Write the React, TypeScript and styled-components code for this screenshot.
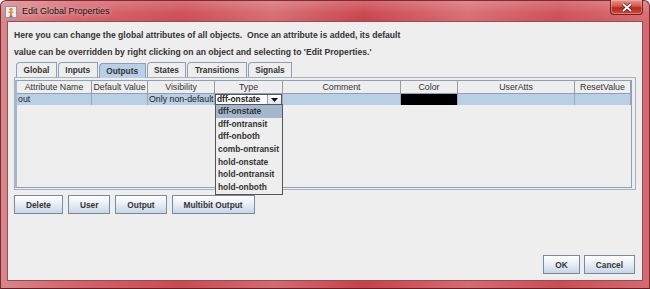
import styled, { createGlobalStyle } from "styled-components";

const GlobalStyle = createGlobalStyle`
  html, body {
    margin: 0;
    padding: 0;
  }
  body {
    width: 650px;
    height: 289px;
    overflow: hidden;
    font-family: "Liberation Sans", Arial, sans-serif;
  }
`;

const columns = [
  { label: "Attribute Name", width: 75 },
  { label: "Default Value", width: 56 },
  { label: "Visibility", width: 67 },
  { label: "Type", width: 68 },
  { label: "Comment", width: 118 },
  { label: "Color", width: 57 },
  { label: "UserAtts", width: 117 },
  { label: "ResetValue", width: 56 },
];

const gridCols = columns.map((c) => `${c.width}px`).join(" ");

const tabs = ["Global", "Inputs", "Outputs", "States", "Transitions", "Signals"];

const typeOptions = [
  "dff-onstate",
  "dff-ontransit",
  "dff-onboth",
  "comb-ontransit",
  "hold-onstate",
  "hold-ontransit",
  "hold-onboth",
];

const App = () => {
  return (
    <>
      <GlobalStyle />
      <Frame>
        <TitleBar>
          <AppIcon />
          <Title>Edit Global Properties</Title>
          <CloseButton>
            <svg width="12" height="9" viewBox="0 0 12 9">
              <path d="M2 1 L10 8 M10 1 L2 8" stroke="#5a1b1b" strokeWidth="3.4" />
              <path d="M2 1 L10 8 M10 1 L2 8" stroke="#ffffff" strokeWidth="1.8" />
            </svg>
          </CloseButton>
        </TitleBar>
        <Body>
          <Content>
            <Description>
              Here you can change the global attributes of all objects.&nbsp; Once an attribute is
              added, its default
              <br />
              value can be overridden by right clicking on an object and selecting to 'Edit
              Properties.'
            </Description>
            <TabRow>
              {tabs.map((t) => (
                <Tab key={t} $active={t === "Outputs"}>
                  {t}
                </Tab>
              ))}
            </TabRow>
            <TabPanel>
              <ScrollPane>
                <HeaderRow>
                  {columns.map((c) => (
                    <HeaderCell key={c.label}>{c.label}</HeaderCell>
                  ))}
                </HeaderRow>
                <DataRow>
                  <Cell>out</Cell>
                  <Cell />
                  <Cell>Only non-default</Cell>
                  <TypeCell>
                    <Combo>
                      <ComboText>dff-onstate</ComboText>
                      <ComboArrow>
                        <svg width="7" height="4" viewBox="0 0 7 4">
                          <path d="M0 0 H7 L3.5 4 Z" fill="#111" />
                        </svg>
                      </ComboArrow>
                    </Combo>
                    <Popup>
                      {typeOptions.map((o, i) => (
                        <PopupItem key={o} $selected={i === 0}>
                          {o}
                        </PopupItem>
                      ))}
                    </Popup>
                  </TypeCell>
                  <Cell />
                  <Cell $black />
                  <Cell />
                  <Cell />
                </DataRow>
              </ScrollPane>
            </TabPanel>
            <ButtonRow>
              <Button>Delete</Button>
              <Button>User</Button>
              <Button>Output</Button>
              <Button>Multibit Output</Button>
            </ButtonRow>
            <Spacer />
            <DialogButtons>
              <Button>OK</Button>
              <Button>Cancel</Button>
            </DialogButtons>
          </Content>
        </Body>
      </Frame>
    </>
  );
};

const AppIcon = () => (
  <IconBox>
    <svg width="12" height="12" viewBox="0 0 12 12">
      <rect x="0.5" y="0.5" width="11" height="11" fill="#e9eef4" stroke="#8a97a6" />
      <circle cx="6" cy="3.3" r="1.6" fill="#e58a2c" />
      <path d="M3 6 L6 5 L9 6 L8 7 L6.8 6.6 L7.4 10.5 H4.6 L5.2 6.6 L4 7 Z" fill="#e58a2c" />
      <path d="M4.6 10.5 H7.4" stroke="#3a78c2" strokeWidth="1.2" />
    </svg>
  </IconBox>
);

export default App;

const Frame = styled.div`
  width: 650px;
  height: 289px;
  box-sizing: border-box;
  display: flex;
  flex-direction: column;
  border: 1px solid #7a2c31;
  border-bottom-color: #5e2226;
  border-radius: 6px 6px 0 0;
  background: linear-gradient(
      180deg,
      rgba(255, 255, 255, 0.22) 0px,
      rgba(255, 255, 255, 0.05) 12px,
      rgba(255, 255, 255, 0) 22px
    ),
    linear-gradient(
      90deg,
      #d9878c 0%,
      #d66168 12%,
      #cc4a52 28%,
      #d56a70 42%,
      #c9414a 56%,
      #d86a71 72%,
      #cd4c54 86%,
      #d66a70 100%
    );
`;

const TitleBar = styled.div`
  height: 20px;
  display: flex;
  align-items: center;
  padding: 0 6px 0 4px;
`;

const IconBox = styled.div`
  width: 12px;
  height: 12px;
  display: flex;
  margin-top: 1px;
`;

const Title = styled.span`
  margin-left: 5px;
  font-family: "Liberation Sans", Arial, sans-serif;
  font-size: 9px;
  color: #111;
  text-shadow: 0 0 4px rgba(255, 255, 255, 0.8);
  flex: 1;
`;

const CloseButton = styled.div`
  align-self: flex-start;
  width: 33px;
  height: 15px;
  margin-top: -1px;
  box-sizing: border-box;
  border: 1px solid #6a2424;
  border-top: none;
  border-radius: 0 0 4px 4px;
  background: linear-gradient(180deg, #e8958e 0%, #d2574b 45%, #b8281c 55%, #cf4b3a 100%);
  box-shadow: inset 0 0 0 1px rgba(255, 200, 200, 0.4);
  display: flex;
  align-items: center;
  justify-content: center;
`;

const Body = styled.div`
  flex: 1;
  display: flex;
  padding: 0 6px 7px 6px;
  min-width: 0;
`;

const Content = styled.div`
  flex: 1;
  min-width: 0;
  display: flex;
  flex-direction: column;
  background: #eeeeee;
  border: 1px solid #8c5256;
  padding: 5px 6px 6px 6px;
  min-height: 0;
`;

const Description = styled.div`
  font-size: 8.6px;
  font-weight: bold;
  line-height: 17px;
  color: #333;
  white-space: nowrap;
`;

const TabRow = styled.div`
  display: flex;
  margin: 1px 0 0 2px;
  height: 15px;
`;

const Tab = styled.div<{ $active?: boolean }>`
  box-sizing: border-box;
  height: 15px;
  padding: 0 6.5px;
  margin-right: 1px;
  display: flex;
  align-items: center;
  font-size: 8.3px;
  font-weight: bold;
  color: #333;
  border: 1px solid #8da0b5;
  border-bottom: none;
  border-radius: 4px 1px 0 0;
  background: ${(p) => (p.$active ? "#b8cfe5" : "#eeeeee")};
  position: relative;
  top: ${(p) => (p.$active ? "1px" : "0")};
`;

const TabPanel = styled.div`
  height: 113px;
  box-sizing: border-box;
  border: 1px solid #a3b3c4;
  padding: 2px 3px 1px 0;
  display: flex;
`;

const ScrollPane = styled.div`
  flex: 1;
  min-width: 0;
  border: 1px solid #8da0b5;
  border-left: 2px solid #a3b8cc;
  background: #eeeeee;
  display: flex;
  flex-direction: column;
`;

const HeaderRow = styled.div`
  display: grid;
  grid-template-columns: ${gridCols};
  height: 12px;
  border-bottom: 1px solid #8da0b5;
`;

const HeaderCell = styled.div`
  box-sizing: border-box;
  border-right: 1px solid #9a9a9a;
  font-size: 8.8px;
  line-height: 12px;
  color: #333;
  text-align: center;
  white-space: nowrap;
  overflow: hidden;
`;

const DataRow = styled.div`
  display: grid;
  grid-template-columns: ${gridCols};
  height: 11px;
  background: #b8cfe5;
`;

const Cell = styled.div<{ $black?: boolean }>`
  box-sizing: border-box;
  border-right: 1px solid #9aa8b6;
  font-size: 8.8px;
  line-height: 11px;
  color: #222;
  padding-left: 1px;
  white-space: nowrap;
  overflow: hidden;
  background: ${(p) => (p.$black ? "#000" : "transparent")};
`;

const TypeCell = styled.div`
  position: relative;
  box-sizing: border-box;
  border-right: 1px solid #9aa8b6;
`;

const Combo = styled.div`
  display: flex;
  height: 11px;
  width: 67px;
  box-sizing: border-box;
  border: 1px solid #555;
  background: #fff;
`;

const ComboText = styled.span`
  flex: 1;
  font-size: 8.4px;
  font-weight: bold;
  line-height: 9px;
  color: #222;
  padding-left: 1px;
  white-space: nowrap;
  overflow: hidden;
`;

const ComboArrow = styled.span`
  width: 13px;
  border-left: 1px solid #8da0b5;
  background: linear-gradient(180deg, #ffffff, #dde6ef);
  display: flex;
  align-items: center;
  justify-content: center;
`;

const Popup = styled.div`
  position: absolute;
  top: 10px;
  left: 0;
  width: 68px;
  box-sizing: border-box;
  border: 1px solid #555;
  background: #eeeeee;
  z-index: 2;
`;

const PopupItem = styled.div<{ $selected?: boolean }>`
  height: 12.7px;
  line-height: 12.7px;
  font-size: 8.4px;
  font-weight: bold;
  color: #333;
  padding-left: 2px;
  white-space: nowrap;
  background: ${(p) => (p.$selected ? "#a3b8cc" : "transparent")};
`;

const ButtonRow = styled.div`
  display: flex;
  gap: 5px;
  margin-top: 5px;
`;

const Button = styled.div`
  height: 19px;
  box-sizing: border-box;
  padding: 0 11px;
  display: flex;
  align-items: center;
  justify-content: center;
  border: 1px solid #7a8a99;
  background: linear-gradient(180deg, #fdfeff 0%, #eef3f8 35%, #d6e2ee 75%, #c6d6e6 100%);
  font-size: 8.3px;
  font-weight: bold;
  color: #333;
  white-space: nowrap;
`;

const Spacer = styled.div`
  flex: 1;
`;

const DialogButtons = styled.div`
  display: flex;
  justify-content: flex-end;
  gap: 4px;
  margin-right: 1px;
`;
